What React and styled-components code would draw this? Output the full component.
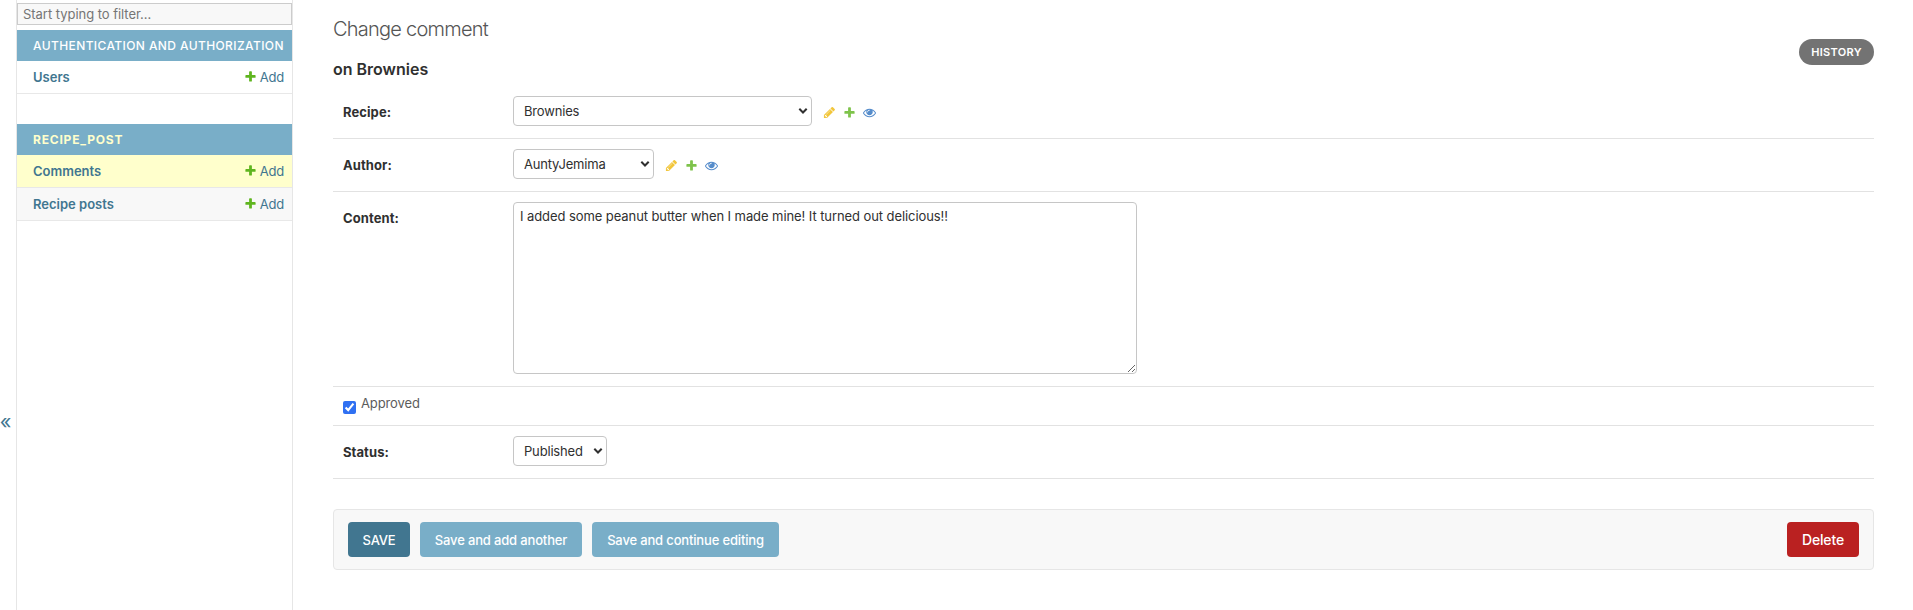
import React from "react";
import styled, { createGlobalStyle, css } from "styled-components";

const GlobalStyle = createGlobalStyle`
  *, *::before, *::after { box-sizing: border-box; }
  body {
    margin: 0;
    background: #fff;
    color: #303030;
    font: 400 13px/20px Inter, "Liberation Sans", sans-serif;
  }
  a { text-decoration: none; color: #417690; }
`;

const Page = styled.div`
  display: flex;
  height: 610px;
  overflow: hidden;
`;

const NavToggle = styled.button`
  flex: 0 0 17px;
  min-width: 0;
  padding: 234px 5px 0 0;
  border: 0;
  border-right: 1px solid #e6e6e6;
  background: #fff;
  color: #417690;
  font: 400 20px/20px Inter, sans-serif;
  display: flex;
  align-items: center;
  justify-content: center;
`;

const Sidebar = styled.nav`
  flex: 0 0 276px;
  border-right: 1px solid #e6e6e6;
  padding-top: 3px;
`;

const FilterInput = styled.input`
  display: block;
  width: 100%;
  height: 22px;
  margin-bottom: 5px;
  padding: 0 5px 1px;
  border: 1px solid #ccc;
  border-radius: 0;
  background: #f8f8f8;
  font: inherit;
  letter-spacing: -0.04px;
  &::placeholder { color: #757575; opacity: 1; }
`;

const AppModule = styled.section`
  margin-bottom: 30px;
`;

const AppCaption = styled.h2`
  height: 31px;
  margin: 0;
  padding: 0 0 0 16px;
  display: flex;
  align-items: center;
  background: #79aec8;
  color: ${(p) => (p.$current ? "#ffffcc" : "#fff")};
  font-size: 12px;
  font-weight: ${(p) => (p.$current ? 700 : 500)};
  letter-spacing: ${(p) => (p.$current ? "0.8px" : "0.4px")};
  white-space: nowrap;
`;

const ModelRow = styled.div`
  height: ${(p) => p.$height || 33}px;
  padding: 0 8px 0 16px;
  display: flex;
  align-items: center;
  justify-content: space-between;
  border-bottom: 1px solid #e8e8e8;
  background: ${(p) => p.$bg || "#fff"};
`;

const ModelLink = styled.a`
  font-weight: 600;
`;

const AddLink = styled.a`
  display: flex;
  align-items: center;
  gap: 3px;
  letter-spacing: -0.2px;
  svg { margin-top: -2px; }
`;

const Main = styled.main`
  flex: 1;
  padding: 17px 39px 0 40px;
`;

const Title = styled.h1`
  margin: 0;
  font-size: 20px;
  line-height: 24px;
  font-weight: 300;
  letter-spacing: -0.76px;
  color: #555;
`;

const SubHeader = styled.div`
  display: flex;
  justify-content: space-between;
  height: 45px;
`;

const Subtitle = styled.h2`
  margin: 16px 0 0;
  font-size: 16px;
  line-height: 24px;
  font-weight: 600;
`;

const HistoryLink = styled.a`
  margin-top: -2px;
  width: 75px;
  height: 26px;
  display: flex;
  align-items: center;
  justify-content: center;
  border-radius: 13px;
  background: #737373;
  color: #fff;
  font-size: 11px;
  font-weight: 600;
  letter-spacing: 0.3px;
`;

const FormRow = styled.div`
  display: flex;
  align-items: flex-start;
  padding: ${(p) => (p.$compact ? "6px 10px 0" : "10px 10px 0")};
  height: ${(p) => p.$height || 53}px;
  border-bottom: 1px solid #e2e2e2;
`;

const Label = styled.label`
  width: 170px;
  padding-top: 6px;
  font-weight: 700;
  letter-spacing: 0.08px;
`;

const SelectBox = styled.div`
  position: relative;
  width: ${(p) => p.$width}px;
  height: 30px;
  margin-right: 11px;
  svg {
    position: absolute;
    right: 4px;
    top: 11px;
    pointer-events: none;
  }
`;

const control = css`
  border: 1px solid #c6c6c6;
  border-radius: 4px;
  background: #fff;
  color: #303030;
  font: inherit;
`;

const Select = styled.select`
  ${control}
  appearance: none;
  width: 100%;
  height: 30px;
  padding: 0 10px;
  letter-spacing: -0.18px;
`;

const TextArea = styled.textarea`
  ${control}
  width: 624px;
  height: 172px;
  padding: 3px 6px;
  letter-spacing: -0.08px;
  resize: both;
`;

const RelatedLinks = styled.div`
  display: flex;
  gap: 7px;
  padding-top: 10px;
  opacity: 0.8;
  svg { display: block; }
`;

const Checkbox = styled.input`
  width: 13px;
  height: 13px;
  margin: 8px 5px 0 0;
  accent-color: #2f70f2;
`;

const CheckLabel = styled.label`
  color: #5c5c5c;
  letter-spacing: -0.12px;
`;

const SubmitRow = styled.div`
  display: flex;
  align-items: center;
  gap: 10px;
  height: 61px;
  margin-top: 30px;
  padding: 0 14px;
  border: 1px solid #e6e6e6;
  border-radius: 4px;
  background: #f8f8f8;
`;

const tones = { primary: "#417690", secondary: "#79aec8", danger: "#ba2121" };

const Button = styled.button`
  width: ${(p) => p.$width}px;
  height: 35px;
  padding: 0;
  border: 0;
  border-radius: 4px;
  background: ${(p) => tones[p.$tone]};
  color: #fff;
  font: 500 ${(p) => (p.$tone === "danger" ? 14 : 13)}px/20px Inter, sans-serif;
  letter-spacing: -0.16px;
  white-space: nowrap;
  ${(p) => p.$tone === "danger" && "margin-left: auto;"}
`;

const icons = {
  change: {
    fill: "#efb80b",
    d: "M491 1536l91-91-235-235-91 91v107h128v128h107zm523-928q0-22-22-22-10 0-17 7l-542 542q-7 7-7 17 0 22 22 22 10 0 17-7l542-542q7-7 7-17zm-54-192l416 416-832 832h-416v-416zm683 96q0 53-37 90l-166 166-416-416 166-165q36-38 90-38 53 0 91 38l235 234q37 39 37 91z",
  },
  add: {
    fill: "#5fb51f",
    d: "M1600 796v192q0 40-28 68t-68 28h-416v416q0 40-28 68t-68 28h-192q-40 0-68-28t-28-68v-416h-416q-40 0-68-28t-28-68v-192q0-40 28-68t68-28h416v-416q0-40 28-68t68-28h192q40 0 68 28t28 68v416h416q40 0 68 28t28 68z",
  },
  view: {
    fill: "#2b70bf",
    d: "M1664 960q-152-236-381-353 61 104 61 225 0 185-131.5 316.5t-316.5 131.5-316.5-131.5-131.5-316.5q0-121 61-225-229 117-381 353 133 205 333.5 326.5t434.5 121.5 434.5-121.5 333.5-326.5zm-720-384q0-20-14-34t-34-14q-125 0-214.5 89.5t-89.5 214.5q0 20 14 34t34 14 34-14 14-34q0-86 61-147t147-61q20 0 34-14t14-34zm848 384q0 34-20 69-140 230-376.5 368.5t-499.5 138.5-499.5-139-376.5-368q-20-35-20-69t20-69q140-229 376.5-368t499.5-139 499.5 139 376.5 368q20 35 20 69z",
  },
};

const Icon = ({ name }) => (
  <svg width="13" height="13" viewBox="0 0 1792 1792" aria-hidden="true">
    <path fill={icons[name].fill} d={icons[name].d} />
  </svg>
);

const Related = () => (
  <RelatedLinks>
    <Icon name="change" />
    <Icon name="add" />
    <Icon name="view" />
  </RelatedLinks>
);

const SelectField = ({ id, width, value }) => (
  <SelectBox $width={width}>
    <Select id={id} defaultValue={value}>
      <option>{value}</option>
    </Select>
    <svg width="10" height="8" viewBox="0 0 10 8" aria-hidden="true">
      <path d="M1.3 1.7 5 5.5 8.7 1.7" fill="none" stroke="#303030" strokeWidth="2" />
    </svg>
  </SelectBox>
);

const Model = ({ name, bg }) => (
  <ModelRow $bg={bg}>
    <ModelLink href="#">{name}</ModelLink>
    <AddLink href="#">
      <Icon name="add" />
      Add
    </AddLink>
  </ModelRow>
);

export default function App() {
  return (
    <>
      <GlobalStyle />
      <Page>
        <NavToggle aria-label="Toggle navigation">«</NavToggle>
        <Sidebar>
          <FilterInput placeholder="Start typing to filter…" />
          <AppModule>
            <AppCaption>AUTHENTICATION AND AUTHORIZATION</AppCaption>
            <Model name="Users" />
          </AppModule>
          <AppModule>
            <AppCaption $current>RECIPE_POST</AppCaption>
            <Model name="Comments" bg="#ffffcc" />
            <Model name="Recipe posts" bg="#f8f8f8" />
          </AppModule>
        </Sidebar>
        <Main>
          <Title>Change comment</Title>
          <SubHeader>
            <Subtitle>on Brownies</Subtitle>
            <HistoryLink href="#">HISTORY</HistoryLink>
          </SubHeader>
          <FormRow>
            <Label htmlFor="recipe">Recipe:</Label>
            <SelectField id="recipe" width={299} value="Brownies" />
            <Related />
          </FormRow>
          <FormRow>
            <Label htmlFor="author">Author:</Label>
            <SelectField id="author" width={141} value="AuntyJemima" />
            <Related />
          </FormRow>
          <FormRow $height={195}>
            <Label htmlFor="content">Content:</Label>
            <TextArea
              id="content"
              spellCheck={false}
              defaultValue="I added some peanut butter when I made mine! It turned out delicious!!"
            />
          </FormRow>
          <FormRow $height={39} $compact>
            <Checkbox id="approved" type="checkbox" defaultChecked />
            <CheckLabel htmlFor="approved">Approved</CheckLabel>
          </FormRow>
          <FormRow>
            <Label htmlFor="status">Status:</Label>
            <SelectField id="status" width={94} value="Published" />
          </FormRow>
          <SubmitRow>
            <Button $tone="primary" $width={62}>SAVE</Button>
            <Button $tone="secondary" $width={162}>Save and add another</Button>
            <Button $tone="secondary" $width={187}>Save and continue editing</Button>
            <Button $tone="danger" $width={72}>Delete</Button>
          </SubmitRow>
        </Main>
      </Page>
    </>
  );
}
